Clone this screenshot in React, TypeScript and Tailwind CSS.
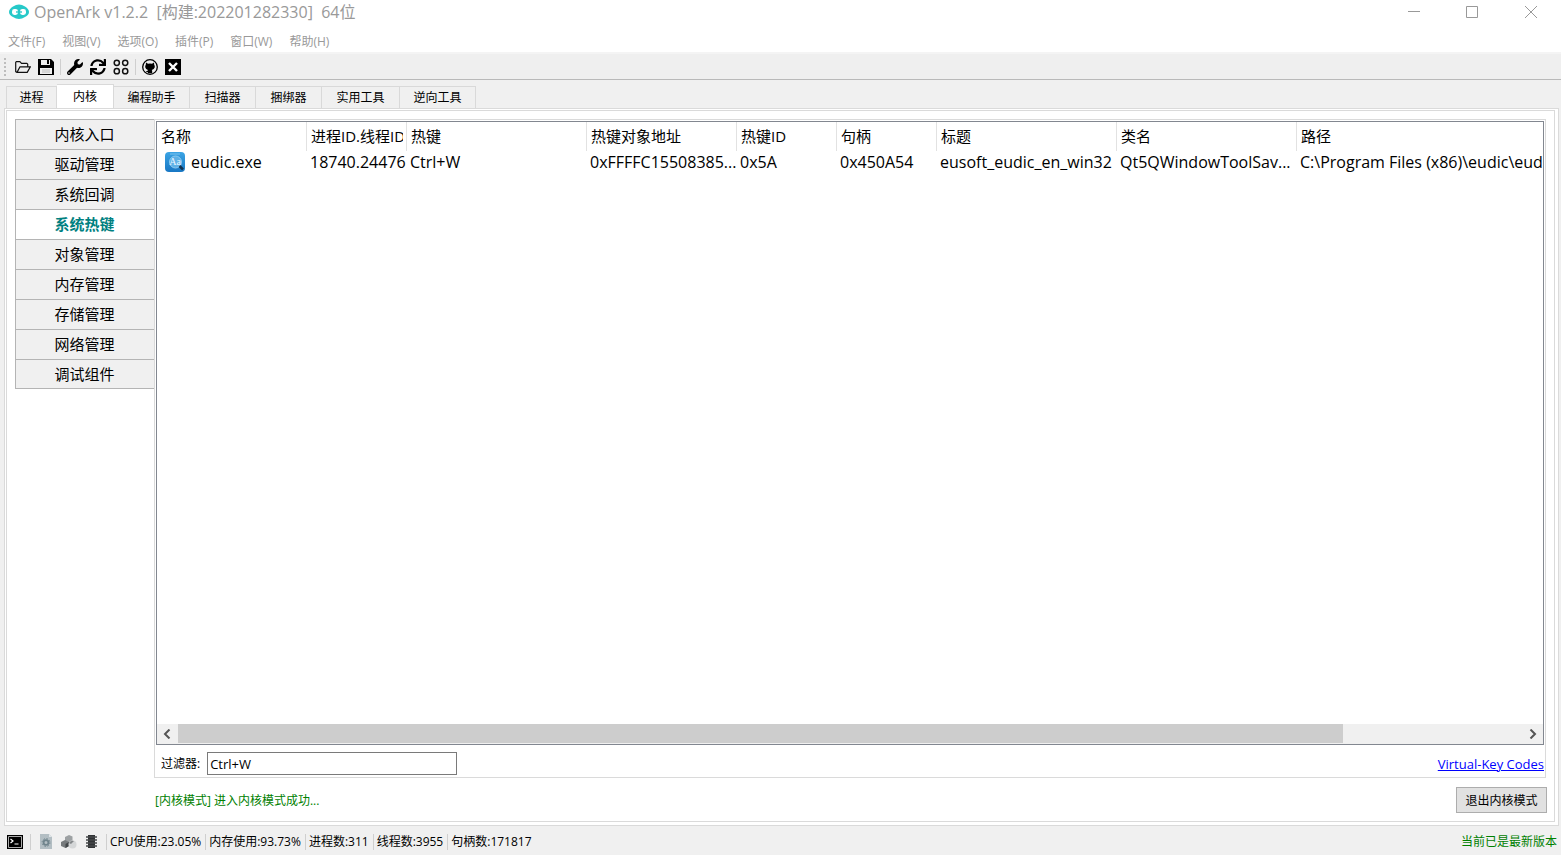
import { useState } from "react";
import { FaSync, FaWrench } from "react-icons/fa";

const menus = ["文件(F)", "视图(V)", "选项(O)", "插件(P)", "窗口(W)", "帮助(H)"];

const tabs = [
  { label: "进程", width: "w-[51px]" },
  { label: "内核", width: "w-[57px]" },
  { label: "编程助手", width: "w-[76px]" },
  { label: "扫描器", width: "w-[66px]" },
  { label: "捆绑器", width: "w-[66px]" },
  { label: "实用工具", width: "w-[78px]" },
  { label: "逆向工具", width: "w-[76px]" },
];

const sections = [
  "内核入口",
  "驱动管理",
  "系统回调",
  "系统热键",
  "对象管理",
  "内存管理",
  "存储管理",
  "网络管理",
  "调试组件",
];

const columns = [
  { title: "名称", width: "w-[150px]" },
  { title: "进程ID.线程ID", width: "w-[100px]" },
  { title: "热键", width: "w-[180px]" },
  { title: "热键对象地址", width: "w-[150px]" },
  { title: "热键ID", width: "w-[100px]" },
  { title: "句柄", width: "w-[100px]" },
  { title: "标题", width: "w-[180px]" },
  { title: "类名", width: "w-[180px]" },
  { title: "路径", width: "" },
];

const rows = [
  [
    "eudic.exe",
    "18740.24476",
    "Ctrl+W",
    "0xFFFFC15508385...",
    "0x5A",
    "0x450A54",
    "eusoft_eudic_en_win32",
    "Qt5QWindowToolSav...",
    "C:\\Program Files (x86)\\eudic\\eudic.exe",
  ],
];

const stats = ["CPU使用:23.05%", "内存使用:93.73%", "进程数:311", "线程数:3955", "句柄数:171817"];

const LogoIcon = () => (
  <svg width="20" height="16" viewBox="0 0 20 16">
    <path d="M4 2.5 Q10 -1.5 16 2.5 Q20 5 20 8 Q20 11 16 13 Q10 17 4 13 Q0 11 0 8 Q0 5 4 2.5Z" fill="#27c9c9" />
    <rect x="3" y="5" width="6" height="6" rx="2.4" fill="#fff" />
    <rect x="11" y="5" width="6" height="6" rx="2.4" fill="#fff" />
    <path d="M7 8h6" stroke="#27c9c9" strokeWidth="1.4" />
  </svg>
);

const FolderIcon = () => (
  <svg width="16" height="16" viewBox="0 0 16 16" fill="none" stroke="#111" strokeWidth="1.2" strokeLinejoin="round">
    <path d="M2 13.400h10.200l3.200-5.600H5L2 13.400 .7 12.800V3.300l.6-.7h3.600l1.600 1.800h5.400l.8.8v2.400" />
  </svg>
);

const SaveIcon = () => (
  <svg width="16" height="16" viewBox="0 0 16 16">
    <path d="M0 0h13l3 3v13H0z" />
    <path d="M3 1h9v5H3zM2 9h12v6H2z" fill="#efefef" />
    <path d="M9 1h2v4H9z" />
    <path d="M4 11h8M4 13h8" stroke="#bbb" />
  </svg>
);

const CirclesIcon = () => (
  <svg width="16" height="16" viewBox="0 0 16 16" fill="none" stroke="#111" strokeWidth="1.5">
    <circle cx="3.8" cy="3.8" r="2.6" />
    <circle cx="12.2" cy="3.8" r="2.6" />
    <circle cx="3.8" cy="12.2" r="2.6" />
    <circle cx="12.2" cy="12.2" r="2.6" />
  </svg>
);

const GithubIcon = () => (
  <svg width="16" height="16" viewBox="0 0 16 16">
    <circle cx="8" cy="8" r="7.3" fill="#efefef" stroke="#000" strokeWidth="1.3" />
    <path d="M4 3.600l2 1.100q2-.4 4 0l2-1.100.2 2.200q.9 1.200.5 2.800-.6 2-2.900 2.400.4.6.4 1.300v1.900H5.800v-1.200q-1.500.2-2.100-1.100l1.600.2.700-1.100Q3.700 10.600 3.300 8.600q-.4-1.600.5-2.800z" />
  </svg>
);

const CloseBoxIcon = () => (
  <svg width="16" height="16" viewBox="0 0 16 16">
    <path d="M0 0h16v16H0z" />
    <path d="M4 4l8 8M12 4l-8 8" stroke="#fff" strokeWidth="2.400" />
  </svg>
);

const EudicIcon = () => (
  <svg width="20" height="20" viewBox="0 0 20 20" className="shrink-0">
    <defs>
      <linearGradient id="eudic" x1="0" y1="0" x2="0" y2="1">
        <stop offset="0" stopColor="#3ba4e4" />
        <stop offset="1" stopColor="#1877c4" />
      </linearGradient>
    </defs>
    <rect width="20" height="20" rx="4" fill="url(#eudic)" />
    <path d="M5 2h10" stroke="#7cc3ee" />
    <circle cx="10.500" cy="10" r="6" fill="#5eb1e6" stroke="#8ccaf0" />
    <path d="M14.500 14l3.500 3.500" stroke="#123250" strokeWidth="2.500" />
    <text x="10" y="13" textAnchor="middle" fontSize="10" fill="#e8f6ff" fontFamily="Liberation Serif, serif">
      Aa
    </text>
  </svg>
);

const ConsoleIcon = () => (
  <svg width="16" height="14" viewBox="0 0 16 14">
    <path d="M0 0h16v14H0z" />
    <path d="M1.500 1.500h13v11h-13z" fill="none" stroke="#aaa" />
    <path d="M3.500 4l2.500 2-2.500 2M7.500 9h4" fill="none" stroke="#fff" strokeWidth="1.200" />
  </svg>
);

const ServiceIcon = () => (
  <svg width="12" height="15" viewBox="0 0 12 15">
    <path d="M0 0h9l3 3v12H0z" fill="#b3bec3" />
    <path d="M9 0l3 3H9z" fill="#dfe5e8" />
    <circle cx="6" cy="8.500" r="2.400" fill="none" stroke="#70848c" strokeWidth="1.800" />
    <circle cx="6" cy="8.500" r="3.900" fill="none" stroke="#70848c" strokeWidth="1" strokeDasharray="1.500 1.560" />
  </svg>
);

const DriverIcon = () => (
  <svg width="16" height="14" viewBox="0 0 16 14">
    <path d="M4 2l4-2 3.500 1.500V6L8 8 4 6z" fill="#9da1a3" />
    <path d="M0 7l4-2 4 2v4l-3.500 2L0 11z" fill="#777b7d" />
    <path d="M4.500 9L8 7v4l-3.500 2z" fill="#44484a" />
    <circle cx="11.500" cy="9.500" r="4" fill="#d5d7d8" />
    <path d="M8 8q2-3 5-2l-3 3z" fill="#85898b" />
  </svg>
);

const ChipIcon = () => (
  <svg width="11" height="13" viewBox="0 0 11 13">
    <path d="M2 0h7v13H2z" fill="#303335" />
    <path d="M0 2h11M0 5h11M0 8h11M0 11h11" stroke="#45484a" strokeWidth="1.400" />
  </svg>
);

const Separator = () => <span className="h-4 w-px shrink-0 bg-[#cfcfcf]" />;

const TitleBar = () => (
  <header className="flex h-[24px] shrink-0 items-center bg-white pl-[9px] text-[#999]">
    <LogoIcon />
    <h1 className="ml-[5px] flex-1 text-[16px] leading-[24px] whitespace-pre">
      {"OpenArk v1.2.2  [构建:202201282330]  64位"}
    </h1>
    <div className="flex">
      <button aria-label="最小化" className="flex h-6 w-[58px] items-center justify-center">
        <svg width="12" height="12" stroke="#999"><path d="M0 5.500h12" /></svg>
      </button>
      <button aria-label="最大化" className="flex h-6 w-[58px] items-center justify-center">
        <svg width="12" height="12" fill="none" stroke="#999"><path d="M.5.5h11v11H.5z" /></svg>
      </button>
      <button aria-label="关闭" className="flex h-6 w-[60px] items-center justify-center">
        <svg width="12" height="12" stroke="#999"><path d="M0 0l12 12M12 0L0 12" /></svg>
      </button>
    </div>
  </header>
);

const Toolbar = () => (
  <div className="flex h-[26px] shrink-0 items-center border-b border-[#b9b9b9] bg-[#efefef] pl-[4px] text-black">
    <span className="h-[18px] border-l-2 border-dotted border-[#bdbdbd]" />
    <div className="ml-[9px] flex items-center gap-[6px]">
      <div className="flex gap-[7px]">
        <button aria-label="打开"><FolderIcon /></button>
        <button aria-label="保存"><SaveIcon /></button>
      </div>
      <Separator />
      <div className="flex gap-[7px]">
        <button aria-label="设置"><FaWrench size={16} /></button>
        <button aria-label="刷新"><FaSync size={16} /></button>
        <button aria-label="插件"><CirclesIcon /></button>
      </div>
      <Separator />
      <div className="flex gap-[7px]">
        <button aria-label="GitHub"><GithubIcon /></button>
        <button aria-label="退出"><CloseBoxIcon /></button>
      </div>
    </div>
  </div>
);

const HotkeyTable = () => (
  <div className="flex min-h-0 flex-1 flex-col border border-[#828790] bg-white">
    <div className="min-h-0 flex-1 overflow-hidden">
      <table className="w-full table-fixed border-collapse">
        <thead className="text-[15px]">
          <tr className="h-[30px]">
            {columns.map((col) => (
              <th key={col.title} scope="col" className={`${col.width} group p-0 text-left align-top font-normal`}>
                <div className="h-[29px] border-r border-[#e2e2e2] pr-[3px] pl-[4px] group-last:border-r-0">
                  <div className="overflow-hidden leading-[29px] whitespace-nowrap">{col.title}</div>
                </div>
              </th>
            ))}
          </tr>
        </thead>
        <tbody className="text-[16px]">
          {rows.map((row) => (
            <tr key={row[0]} className="h-5">
              {row.map((cell, i) => (
                <td key={i} className="overflow-hidden p-0 pl-[3px] leading-[20px] whitespace-nowrap">
                  {i === 0 ? (
                    <span className="flex items-center gap-[6px] pl-[5px]">
                      <EudicIcon />
                      {cell}
                    </span>
                  ) : (
                    cell
                  )}
                </td>
              ))}
            </tr>
          ))}
        </tbody>
      </table>
    </div>
    <div className="flex h-5 shrink-0 bg-[#f0f0f0]">
      <button aria-label="向左滚动" className="flex w-[21px] items-center justify-center pr-[2px]">
        <svg width="8" height="10" fill="none" stroke="#555" strokeWidth="2"><path d="M6.500.5L2 5l4.500 4.500" /></svg>
      </button>
      <div className="flex-1">
        <div className="h-[19px] w-13/15 bg-[#cdcdcd]" />
      </div>
      <button aria-label="向右滚动" className="flex w-[21px] items-center justify-center">
        <svg width="8" height="10" fill="none" stroke="#555" strokeWidth="2"><path d="M1.500.5L6 5 1.500 9.500" /></svg>
      </button>
    </div>
  </div>
);

const App = () => {
  const [tab, setTab] = useState("内核");
  const [section, setSection] = useState("系统热键");
  const [filter, setFilter] = useState("Ctrl+W");

  return (
    <div className="flex h-screen flex-col bg-[#f0f0f0] font-['Open_Sans','Noto_Sans_CJK_SC',sans-serif] text-[12px] leading-[16px] text-black">
      <TitleBar />
      <nav className="flex h-[30px] shrink-0 items-center gap-[17px] border-b-2 border-[#f4f4f4] bg-white pt-[8px] pl-[8px] text-[#999]">
        {menus.map((menu) => (
          <button key={menu}>{menu}</button>
        ))}
      </nav>
      <Toolbar />

      <div className="mt-[4px] flex h-[24px] shrink-0 items-end pl-[6px]">
        {tabs.map(({ label, width }) => (
          <button
            key={label}
            onClick={() => setTab(label)}
            className={`${width} border-t border-r border-[#d9d9d9] pt-px ${
              tab === label ? "h-[24px] bg-white" : "h-[22px] bg-[#f0f0f0] first:border-l"
            }`}
          >
            {label}
          </button>
        ))}
      </div>

      <main className="mr-[2px] ml-[4px] flex min-h-0 flex-1 flex-col border border-[#dadada] bg-white p-px">
        <div className="mr-[2px] mb-[2px] flex min-h-0 flex-1 flex-col border border-[#dadada] pt-[8px] pr-[7px] pb-[8px] pl-[8px]">
          <div className="flex min-h-0 flex-1">
            <nav className="flex w-[140px] shrink-0 flex-col">
              {sections.map((name) => (
                <button
                  key={name}
                  onClick={() => setSection(name)}
                  className={`h-[30px] border-t border-l border-[#b4b4b4] pr-[2px] pb-[2px] text-[15px] last:border-b last:pb-0 ${
                    section === name ? "bg-white font-bold text-[#008080]" : "bg-[#f0f0f0]"
                  }`}
                >
                  {name}
                </button>
              ))}
            </nav>
            <section className="mr-px -ml-px flex min-w-0 flex-1 flex-col border border-[#dadada] p-px">
              <HotkeyTable />
              <div className="flex h-[31px] shrink-0 items-center pt-[6px] pl-[5px]">
                <label htmlFor="filter">过滤器:</label>
                <input
                  id="filter"
                  value={filter}
                  onChange={(e) => setFilter(e.target.value)}
                  className="ml-[7px] h-[23px] w-[250px] border border-[#7a7a7a] bg-white px-[2px] text-[13px]"
                />
                <a href="#keycodes" className="ml-auto text-[13px] text-[#0000ff] underline">
                  Virtual-Key Codes
                </a>
              </div>
            </section>
          </div>
          <div className="mt-[9px] flex h-[26px] shrink-0 items-center justify-between pl-[140px]">
            <p className="pt-[2px] text-[#008000]">[内核模式] 进入内核模式成功...</p>
            <button className="h-[26px] w-[91px] border border-[#adadad] bg-[#e1e1e1] pt-px">退出内核模式</button>
          </div>
        </div>
      </main>

      <footer className="flex h-[29px] shrink-0 items-center pt-[2px] pr-[4px] pl-[7px]">
        <ConsoleIcon />
        <span className="ml-[7px] flex items-center gap-[9px]">
          <Separator />
          <ServiceIcon />
          <DriverIcon />
          <ChipIcon />
        </span>
        <div className="ml-[9px] flex items-center gap-[4px]">
          {stats.map((stat) => (
            <span key={stat} className="flex items-center gap-[3px]">
              <Separator />
              {stat}
            </span>
          ))}
        </div>
        <span className="ml-auto text-[#008000]">当前已是最新版本</span>
      </footer>
    </div>
  );
};

export default App;
